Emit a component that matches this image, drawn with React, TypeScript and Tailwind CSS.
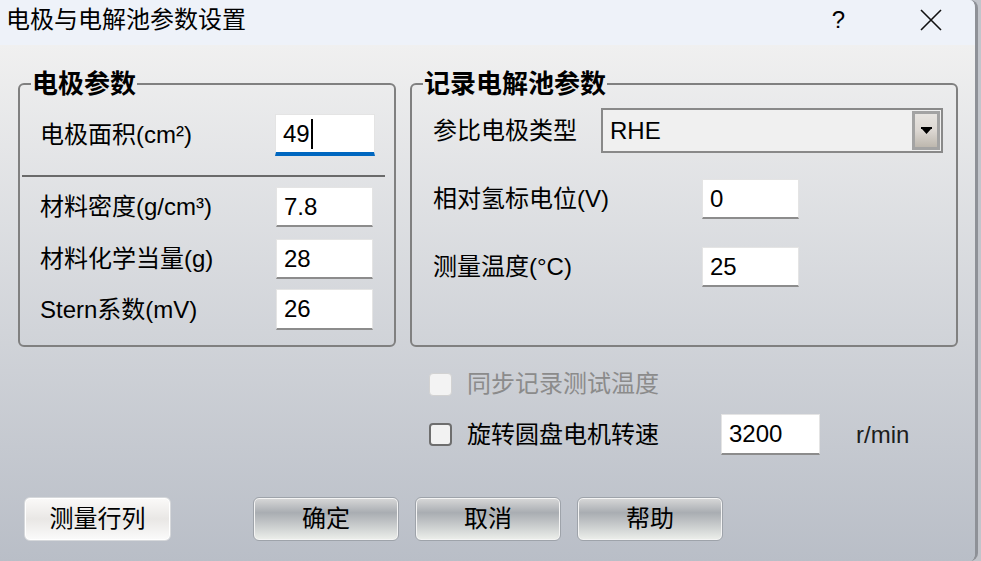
import type { ReactNode } from 'react';

const font = { fontFamily: '"Liberation Sans", "Noto Sans CJK SC", sans-serif' };

function TextBox({
  value,
  focused,
  className = '',
}: {
  value: string;
  focused?: boolean;
  className?: string;
}) {
  return (
    <div
      className={`flex items-center bg-white pl-[7px] text-[24px] leading-none text-black border-x border-t border-[#e4e4e4] ${
        focused ? 'border-b-[4px] border-b-[#0067c0]' : 'border-b-2 border-b-[#8c8c8c]'
      } ${className}`}
    >
      <span>{value}</span>
      {focused && <span className="ml-[1px] h-[30px] w-[2px] bg-black" />}
    </div>
  );
}

function Row({ label, children, className = '' }: { label: ReactNode; children: ReactNode; className?: string }) {
  return (
    <div className={`flex items-center ${className}`}>
      <span className="text-[24px] leading-none text-black">{label}</span>
      {children}
    </div>
  );
}

function Group({ title, className = '', children }: { title: string; className?: string; children: ReactNode }) {
  return (
    <fieldset className={`rounded-[6px] border-2 border-[#808080] p-0 ${className}`}>
      <legend className="ml-[11px] px-[1px] text-[26px] font-bold leading-[32px] text-black">{title}</legend>
      {children}
    </fieldset>
  );
}

function PushButton({ label, primary }: { label: string; primary?: boolean }) {
  return (
    <button
      className={`flex h-[44px] items-center justify-center rounded-[6px] border text-[24px] leading-none text-black ${
        primary
          ? 'w-[147px] border-[#d6d8db] bg-linear-to-b from-[#fbfaf9] via-[#e9e7e5] to-[#fbfbfb] shadow-[inset_0_0_0_1px_#ffffff]'
          : 'w-[146px] border-[#9ea3aa] bg-linear-to-b from-[#d9d9d9] via-[#a9adb2] via-35% to-[#eef0ec] shadow-[inset_0_0_0_1px_#f4f4f4]'
      }`}
    >
      {label}
    </button>
  );
}

function CheckBox({ disabled }: { disabled?: boolean }) {
  return (
    <span
      className={`block h-[23px] w-[23px] rounded-[4px] ${
        disabled ? 'border border-[#d2d2d2] bg-[#f3f3f3]' : 'border-2 border-[#6e6e6e] bg-[#f2f2f2]'
      }`}
    />
  );
}

export default function App() {
  return (
    <div className="h-[561px] w-[981px] overflow-hidden bg-[#c2c5cb]" style={font}>
      <div className="flex h-full w-[978px] flex-col overflow-hidden rounded-r-[8px] border-r-[3px] border-[#8e9197]">
        {/* Title bar */}
        <div className="flex h-[45px] shrink-0 items-center bg-[#eef2f9] pb-[5px] pl-[6px]">
          <span className="text-[24px] leading-none text-black">电极与电解池参数设置</span>
          <span className="ml-auto mr-[75px] text-[24px] leading-none text-black">?</span>
          <svg width="22" height="22" viewBox="0 0 22 22" className="mr-[33px]">
            <path d="M1 1 L21 21 M21 1 L1 21" stroke="#111" strokeWidth="1.6" fill="none" />
          </svg>
        </div>

        {/* Body */}
        <div className="flex flex-1 flex-col bg-linear-to-b from-[#f0f0f0] to-[#b9bec7] pl-[18px] pt-[23px]">
          <div className="flex items-stretch gap-[14px]">
            <Group title="电极参数" className="w-[378px]">
              <Row label="电极面积(cm²)" className="mt-[14px] h-[42px] justify-between pl-[20px] pr-[19px]">
                <TextBox value="49" focused className="h-[42px] w-[100px]" />
              </Row>
              <div className="ml-[2px] mr-[9px] mt-[19px] h-[2px] bg-[#6a6a6a]" />
              <Row label="材料密度(g/cm³)" className="mt-[10px] h-[40px] justify-between pl-[20px] pr-[21px]">
                <TextBox value="7.8" className="h-[40px] w-[97px]" />
              </Row>
              <Row label="材料化学当量(g)" className="mt-[12px] h-[40px] justify-between pl-[20px] pr-[21px]">
                <TextBox value="28" className="h-[40px] w-[97px]" />
              </Row>
              <Row label="Stern系数(mV)" className="mt-[10px] h-[41px] justify-between pb-0 pl-[20px] pr-[21px]">
                <TextBox value="26" className="h-[41px] w-[97px]" />
              </Row>
              <div className="h-[15px]" />
            </Group>

            <Group title="记录电解池参数" className="w-[548px]">
              <Row label="参比电极类型" className="mt-[8px] h-[45px] pl-[21px] pr-[13px]">
                <div className="ml-auto flex h-[45px] w-[342px] items-center border-2 border-[#898989] bg-[#f0f0f0] pl-[7px] pr-[1px]">
                  <span className="text-[24px] leading-none text-black">RHE</span>
                  <div className="ml-auto flex h-[39px] w-[28px] items-center justify-center border-[3px] border-[#a3a3a3] bg-linear-to-b from-[#e7e4e0] via-[#dcd7d2] to-[#bdb7ae]">
                    <svg width="11" height="8" viewBox="0 0 11 8">
                      <path d="M0 0 H11 V2 H0 Z M1 2 H10 L5.5 7 Z" fill="#000" />
                    </svg>
                  </div>
                </div>
              </Row>
              <Row label="相对氢标电位(V)" className="mt-[26px] h-[40px] pl-[21px]">
                <TextBox value="0" className="ml-auto mr-[157px] h-[40px] w-[97px]" />
              </Row>
              <Row label="测量温度(°C)" className="mt-[28px] h-[40px] pl-[21px]">
                <TextBox value="25" className="ml-auto mr-[157px] h-[40px] w-[97px]" />
              </Row>
            </Group>
          </div>

          {/* Options */}
          <div className="ml-[411px] mt-[17px] flex h-[40px] items-center">
            <CheckBox disabled />
            <span className="ml-[15px] text-[24px] leading-none text-[#8b8b8b]">同步记录测试温度</span>
          </div>
          <div className="ml-[411px] mt-[10px] flex h-[41px] items-center">
            <CheckBox />
            <span className="ml-[15px] w-[254px] text-[24px] leading-none text-black">旋转圆盘电机转速</span>
            <TextBox value="3200" className="h-[41px] w-[99px]" />
            <span className="ml-[36px] text-[24px] leading-none text-[#1d1d1d]">r/min</span>
          </div>

          {/* Buttons */}
          <div className="ml-[6px] mt-[42px] flex items-center">
            <PushButton label="测量行列" primary />
            <div className="ml-[82px] flex gap-[16px]">
              <PushButton label="确定" />
              <PushButton label="取消" />
              <PushButton label="帮助" />
            </div>
          </div>
        </div>
      </div>
    </div>
  );
}
